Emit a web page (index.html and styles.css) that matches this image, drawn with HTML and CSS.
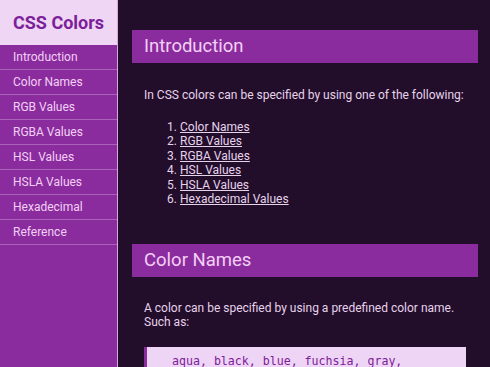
FILE: index.html
```
<!DOCTYPE html>
<html lang="en">
<head>
<meta charset="utf-8">
<title>CSS Colors</title>
<link rel="stylesheet" href="styles.css">
</head>
<body>
<aside class="sidebar">
  <div class="brand">CSS Colors</div>
  <nav>
    <ul class="nav-list">
      <li><a class="nav-link" href="#introduction">Introduction</a></li>
      <li><a class="nav-link" href="#color-names">Color Names</a></li>
      <li><a class="nav-link" href="#rgb">RGB Values</a></li>
      <li><a class="nav-link" href="#rgba">RGBA Values</a></li>
      <li><a class="nav-link" href="#hsl">HSL Values</a></li>
      <li><a class="nav-link" href="#hsla">HSLA Values</a></li>
      <li><a class="nav-link" href="#hex">Hexadecimal</a></li>
      <li><a class="nav-link" href="#reference">Reference</a></li>
    </ul>
  </nav>
</aside>
<main class="main">
  <section class="section" id="introduction">
    <h2 class="section-title">Introduction</h2>
    <div class="section-body">
      <p class="text">In CSS colors can be specified by using one of the following:</p>
      <ol class="list">
        <li><a href="#color-names">Color Names</a></li>
        <li><a href="#rgb">RGB Values</a></li>
        <li><a href="#rgba">RGBA Values</a></li>
        <li><a href="#hsl">HSL Values</a></li>
        <li><a href="#hsla">HSLA Values</a></li>
        <li><a href="#hex">Hexadecimal Values</a></li>
      </ol>
    </div>
  </section>
  <section class="section" id="color-names">
    <h2 class="section-title">Color Names</h2>
    <div class="section-body">
      <p class="text text-tight">A color can be specified by using a predefined color name. Such as:</p>
      <pre class="code">aqua, black, blue, fuchsia, gray,
green, lime, maroon, navy, olive</pre>
    </div>
  </section>
</main>
</body>
</html>
```
FILE: styles.css
```
* { box-sizing: border-box; }
html, body { height: 100%; }
body {
  margin: 0;
  display: flex;
  overflow: hidden;
  background: #220d2a;
  font-family: Roboto, "Liberation Sans", sans-serif;
  font-size: 12px;
  color: #e6d3ea;
}
.sidebar {
  width: 118px;
  flex-shrink: 0;
  background: #8b2c9e;
  border-right: 1px solid #d8a7e0;
}
.brand {
  height: 45px;
  display: flex;
  align-items: center;
  padding-left: 13px;
  background: #eed6f4;
  color: #7b2099;
  font-size: 18px;
  font-weight: 700;
}
.nav-list {
  list-style: none;
  margin: 0;
  padding: 0;
}
.nav-link {
  display: block;
  height: 25px;
  line-height: 24px;
  padding-left: 13px;
  border-bottom: 1px solid #ab62ba;
  color: #f2d0f5;
  text-decoration: none;
}
.main {
  flex: 1;
  padding: 30px 12px 0 14px;
  overflow: hidden;
}
.section { margin-bottom: 38px; }
.section-title {
  margin: 0;
  height: 33px;
  line-height: 33px;
  padding: 0 12px;
  background: #8b2c9e;
  color: #f3d0f6;
  font-size: 18.5px;
  font-weight: 400;
}
.section-body { padding: 0 12px; }
.text {
  margin: 25px 0 17.6px;
  line-height: 14.4px;
}
.text-tight { line-height: 13.6px; margin-bottom: 17px; }
.list {
  margin: 0;
  padding-left: 36px;
  line-height: 14.4px;
}
.list a { color: #e6d3ea; }
.code {
  margin: 0;
  padding: 7px 12px 8px 25px;
  background: #efd5f5;
  border-left: 3px solid #8b2c9e;
  color: #7b2099;
  font-family: "DejaVu Sans Mono", monospace;
  font-size: 11.6px;
  line-height: 14.4px;
}
```
